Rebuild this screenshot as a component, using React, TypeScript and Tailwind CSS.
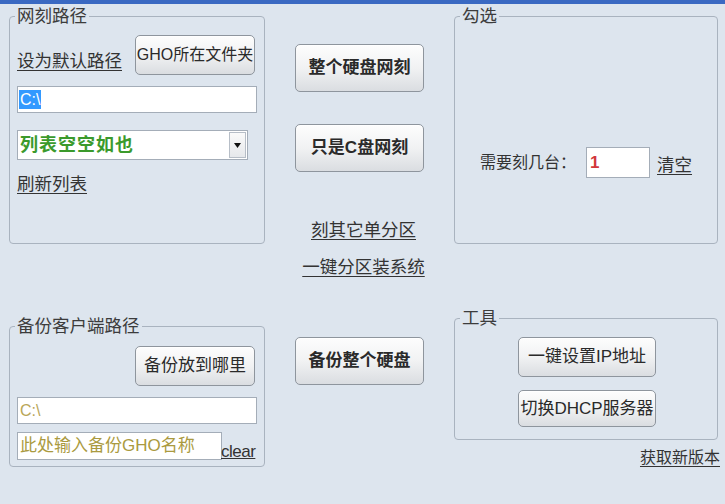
import React from "react";

function GroupBox({ title, className, children }: { title: string; className?: string; children?: React.ReactNode }) {
  return (
    <div className={"relative border border-[#a9b3bf] rounded-[4px] " + (className ?? "")}>
      <span className="absolute left-[5px] top-[-12px] px-[2px] bg-[#dde5ee] text-[17.5px] leading-[22px] text-[#3c3c3c]">
        {title}
      </span>
      {children}
    </div>
  );
}

function Btn({ children, className, bold }: { children: React.ReactNode; className?: string; bold?: boolean }) {
  return (
    <button
      className={
        "flex items-center justify-center border border-[#8e959d] rounded-[5px] bg-linear-to-b from-[#fdfdfd] via-[#f1f2f3] to-[#dadde1] shadow-[inset_0_1px_0_#ffffff] text-[#2a2a2a] " +
        (bold ? "font-bold text-[17px] " : "text-[16px] ") +
        (className ?? "")
      }
    >
      {children}
    </button>
  );
}

function Link({ children, className }: { children: React.ReactNode; className?: string }) {
  return <span className={"underline underline-offset-[3px] decoration-1 leading-[22px] text-[#333] " + (className ?? "text-[17.5px]")}>{children}</span>;
}

export default function App() {
  return (
    <div className="w-[725px] h-[504px] overflow-hidden bg-[#dde5ee] font-['Liberation_Sans','Noto_Sans_CJK_SC',sans-serif]">
      <div className="h-[4px] bg-[#3a69c2]" />
      <div className="flex pl-[9px] pt-[12px]">
        {/* left column */}
        <div className="w-[256px] flex flex-col">
          <GroupBox title="网刻路径" className="h-[228px]">
            <div className="flex items-end pt-[18px] pl-[7px] pr-[9px]">
              <Link className="text-[17.5px] mb-[3px]">设为默认路径</Link>
              <Btn className="ml-auto w-[120px] h-[40px]">GHO所在文件夹</Btn>
            </div>
            <div className="mt-[11px] ml-[7px] w-[240px] h-[27px] bg-white border border-[#a4adb8] flex items-center px-[1px]">
              <span className="bg-[#3399ff] text-white text-[16px] leading-[19px] px-[1px]">C:\</span>
            </div>
            <div className="mt-[17px] ml-[7px] w-[231px] h-[30px] bg-white border border-[#a4adb8] flex items-center">
              <span className="pl-[2px] text-[18px] font-bold text-[#3b9a2c] tracking-[1px]">列表空空如也</span>
              <span className="ml-auto mr-[1px] w-[17px] h-[26px] border border-[#b7bec7] bg-linear-to-b from-[#fafafa] to-[#e6e8eb] flex items-center justify-center">
                <svg width="7" height="5" viewBox="0 0 7 5"><path d="M0 0 H7 L3.5 5 Z" fill="#111" /></svg>
              </span>
            </div>
            <div className="mt-[13px] ml-[7px]">
              <Link>刷新列表</Link>
            </div>
          </GroupBox>

          <GroupBox title="备份客户端路径" className="mt-[82px] h-[141px]">
            <div className="flex pt-[19px] pr-[9px]">
              <Btn className="ml-auto w-[120px] h-[40px] text-[17px]">备份放到哪里</Btn>
            </div>
            <div className="mt-[11px] ml-[7px] w-[240px] h-[27px] bg-white border border-[#a4adb8] flex items-center px-[2px]">
              <span className="text-[#b9a658] text-[16px]">C:\</span>
            </div>
            <div className="mt-[8px] ml-[7px] flex items-end">
              <div className="w-[205px] h-[28px] bg-white border border-[#a4adb8] flex items-center px-[2px]">
                <span className="text-[#aa9a40] text-[17px]">此处输入备份GHO名称</span>
              </div>
              <span className="text-[17px] leading-[19px] text-[#333] underline tracking-[-0.5px] -ml-[1px] mb-[-1px]">clear</span>
            </div>
          </GroupBox>
        </div>

        {/* middle column */}
        <div className="ml-[30px] w-[129px] flex flex-col items-center">
          <Btn bold className="mt-[28px] w-[129px] h-[48px]">整个硬盘网刻</Btn>
          <Btn bold className="mt-[32px] w-[129px] h-[48px]">只是C盘网刻</Btn>
          <Link className="text-[17.5px] mt-[47px] ml-[8px]">刻其它单分区</Link>
          <Link className="text-[17.5px] mt-[15px] ml-[8px] whitespace-nowrap">一键分区装系统</Link>
          <Btn bold className="mt-[59px] w-[129px] h-[48px]">备份整个硬盘</Btn>
        </div>

        {/* right column */}
        <div className="ml-[30px] w-[264px] flex flex-col">
          <GroupBox title="勾选" className="h-[228px]">
            <div className="mt-[130px] ml-[25px] flex items-center">
              <span className="text-[16px] text-[#333] whitespace-nowrap">需要刻几台：</span>
              <div className="ml-[10px] w-[64px] h-[31px] bg-white border border-[#a4adb8] flex items-center px-[3px]">
                <span className="text-[#d2373b] font-bold text-[17px]">1</span>
              </div>
              <Link className="text-[17.5px] ml-[7px] mt-[4px]">清空</Link>
            </div>
          </GroupBox>

          <GroupBox title="工具" className="mt-[74px] h-[122px]">
            <div className="flex flex-col pl-[63px] pt-[18px]">
              <Btn className="w-[138px] h-[40px] text-[17px]">一键设置IP地址</Btn>
              <Btn className="mt-[13px] w-[138px] h-[37px] text-[17px]">切换DHCP服务器</Btn>
            </div>
          </GroupBox>
          <div className="flex justify-end mt-[7px] mr-[-2px]">
            <Link className="text-[16px]">获取新版本</Link>
          </div>
        </div>
      </div>
    </div>
  );
}
